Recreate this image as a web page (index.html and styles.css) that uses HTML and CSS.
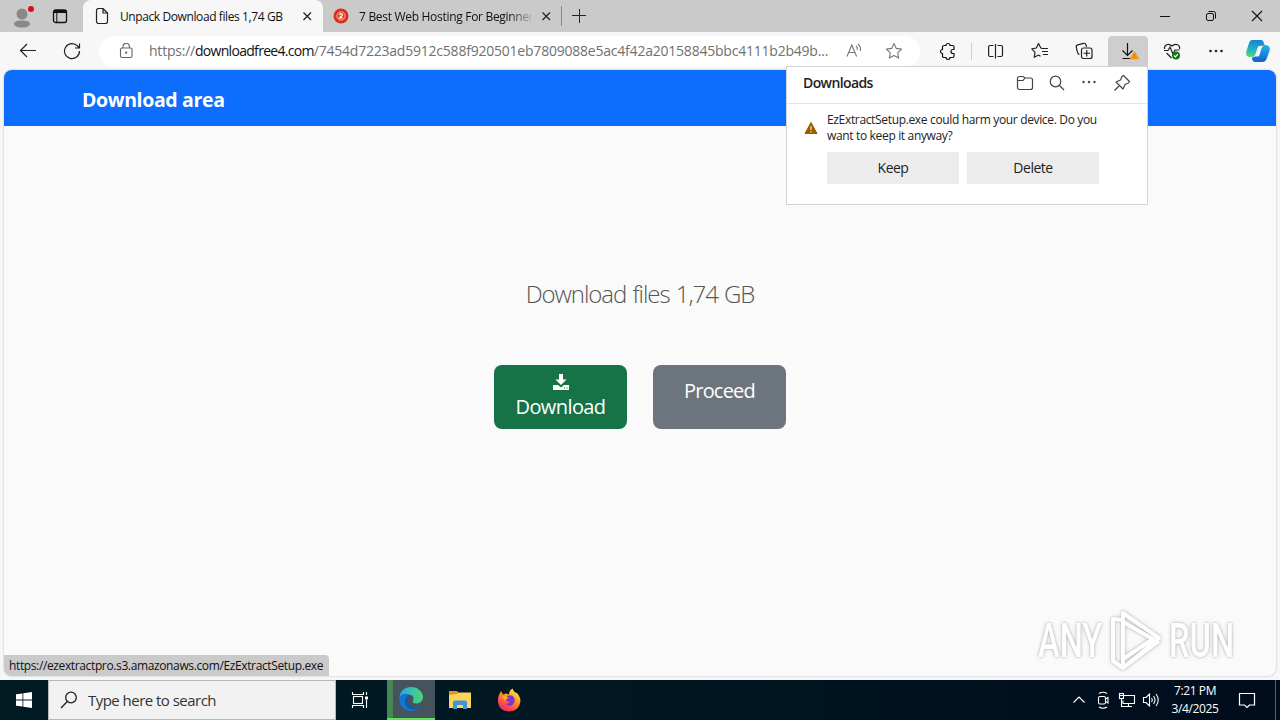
FILE: index.html
```html
<!DOCTYPE html>
<html lang="en">
<head>
    <meta charset="UTF-8">
    <meta name="viewport" content="width=device-width, initial-scale=1.0">
    <title>Unpack Download files 1,74 GB</title>
    <link rel="stylesheet" href="styles.css">
</head>
<body>
    <div class="tabstrip">
        <div class="profile">
            <svg width="24" height="24" viewBox="0 0 24 24"><circle cx="12" cy="9" r="5.500" fill="#8b8887"/><path d="M4 19.500c0-3.500 3.500-4 8-4s8 .5 8 4c-1.500 2.500-4.500 3-8 3s-6.500-.5-8-3z" fill="#8b8887"/><circle cx="21" cy="4" r="3" fill="#d80f16"/></svg>
        </div>
        <div class="tab-actions">
            <svg width="16" height="16" viewBox="0 0 16 16" fill="none" stroke="#111"><rect x="1.500" y="2" width="13" height="12.500" rx="2" stroke-width="1.300"/><path d="M2 3.500h12" stroke-width="3"/><path d="M4.800 4v10.500"/></svg>
        </div>
        <div class="tab active">
            <svg class="favicon" width="14" height="16" viewBox="0 0 14 16" fill="none" stroke="#222" stroke-width="1.200"><path d="M1.500 2.500a2 2 0 0 1 2-2H8l4.500 4.500v8.500a2 2 0 0 1-2 2h-7a2 2 0 0 1-2-2zM8 .5V5h4.500"/></svg>
            <span class="tab-title">Unpack Download files 1,74 GB</span>
            <svg class="close" width="10" height="10" viewBox="0 0 10 10" stroke="#222" stroke-width="1.300"><path d="M1.500 1.500l7.500 7.500M9 1.500L1.500 9"/></svg>
        </div>
        <div class="tab second">
            <svg class="favicon" width="16" height="16" viewBox="0 0 16 16"><circle cx="8" cy="8" r="7.500" fill="#d92e18"/><circle cx="8" cy="8" r="4.200" fill="#e0402a" stroke="#fff" stroke-width=".7" stroke-opacity=".8"/><path d="M6.300 6.800c.5-1.600 3.600-1.200 3 .5C8.700 8.500 7 8.800 6.400 9.800h3.300" fill="none" stroke="#fff" stroke-width="1.200"/></svg>
            <span class="tab-title fade">7 Best Web Hosting For Beginner</span>
            <svg class="close" width="10" height="10" viewBox="0 0 10 10" stroke="#222" stroke-width="1.200"><path d="M1.500 1.500l7.500 7.500M9 1.500L1.500 9"/></svg>
        </div>
        <div class="tab-divider"></div>
        <svg class="new-tab" width="14" height="14" viewBox="0 0 14 14" stroke="#222"><path d="M0 6.500h14M7.500 0v14"/></svg>
        <div class="window-buttons">
            <svg width="12" height="12" viewBox="0 0 12 12" stroke="#111"><path d="M1 6.500h10"/></svg>
            <svg width="12" height="12" viewBox="0 0 12 12" fill="none" stroke="#111"><rect x="1.500" y="3.500" width="7" height="7" rx="1.500"/><path d="M3.500 1.500h5a2 2 0 0 1 2 2v5"/></svg>
            <svg width="12" height="12" viewBox="0 0 12 12" stroke="#111" stroke-width="1.100"><path d="M1 1l10 10M11 1L1 11"/></svg>
        </div>
    </div>

    <div class="toolbar">
        <div class="nav-buttons">
            <svg width="18" height="16" viewBox="0 0 18 16" fill="none" stroke="#222" stroke-width="1.200"><path d="M17 7.500H1.500M8 1L1.500 7.500 8 14"/></svg>
            <svg width="18" height="18" viewBox="0 0 18 18" fill="none" stroke="#222" stroke-width="1.200"><path d="M16.500 9A7.500 7.500 0 1 1 14.500 4L16.500 6M16.500 1.500V6H12"/></svg>
        </div>
        <div class="address">
            <svg class="lock" width="14" height="16" viewBox="0 0 14 16" fill="none" stroke="#666" stroke-width="1.100"><rect x="1.500" y="5" width="11.500" height="9.500" rx="1.500"/><path d="M4 5V3.500a3.200 3.200 0 0 1 6.400 0V5"/><circle cx="7.200" cy="9.700" r=".6" fill="#666"/></svg>
            <span class="url">https://<b>downloadfree4.com</b>/7454d7223ad5912c588f920501eb7809088e5ac4f42a20158845bbc4111b2b49b...</span>
            <svg class="read" width="16" height="16" viewBox="0 0 16 16" fill="none" stroke="#777" stroke-width="1.100"><path d="M1 13.500L5.800 2 10.600 13.500M2.700 9.500h6.200M10 3q1.800 1.500 1.300 4M12 1q3.200 3 2.400 7"/></svg>
            <svg class="star" width="18" height="18" viewBox="0 0 18 18" fill="none" stroke="#777" stroke-width="1.100" stroke-linejoin="round"><path d="M9 1.500l2.300 4.900 5.300.7-3.900 3.700 1 5.300L9 13.500l-4.700 2.600 1-5.300L1.400 7.100l5.300-.7z"/></svg>
        </div>
        <div class="tools">
            <div class="tool ext"><svg width="16" height="18" viewBox="0 0 16 18" fill="none" stroke="#111" stroke-width="1.200"><path d="M6 3.500a2 2 0 0 1 4 0h2.500A1.500 1.500 0 0 1 14 5v2.500h-1a2 2 0 0 0 0 4h1V14a1.500 1.500 0 0 1-1.500 1.500H10a2 2 0 0 1-4 0H4A1.500 1.500 0 0 1 2.500 14v-2.500a2 2 0 0 1 0-4V5A1.500 1.500 0 0 1 4 3.500z"/></svg></div>
            <div class="tool-divider"></div>
            <div class="tool"><svg width="16" height="18" viewBox="0 0 16 18" fill="none" stroke="#222" stroke-width="1.200"><path d="M5.500 3.500H2A1.500 1.500 0 0 0 .6 5v8A1.500 1.500 0 0 0 2 14.500h3.500M7.500 2v14.500M9.500 3.500H13A1.500 1.500 0 0 1 14.500 5v8a1.500 1.500 0 0 1-1.500 1.500H9.500"/></svg></div>
            <div class="tool"><svg width="18" height="18" viewBox="0 0 18 18" fill="none" stroke="#222" stroke-width="1.200" stroke-linejoin="round"><path d="M11 6.300L9.800 6 7.500 1.500 5.300 6l-4.500.8L4 10.300l-.8 5L7.500 13l2 1.200M11 6.500h6M11 9.500h6M12 12.500h5"/></svg></div>
            <div class="tool"><svg width="18" height="18" viewBox="0 0 18 18" fill="none" stroke="#222" stroke-width="1.200"><path d="M4.500 12.500C2 12 3 10.500 2 8.500L1.300 5.200a2 2 0 0 1 1.400-2.400l6-1.500A2 2 0 0 1 11 2.800L11.500 5"/><rect x="6.500" y="6" width="10.500" height="10.500" rx="2"/><path d="M11.750 8v6.500M8.500 11.250H15"/></svg></div>
            <div class="tool pressed"><svg width="22" height="20" viewBox="0 0 22 20" fill="none" stroke="#111" stroke-width="1.200"><path d="M10.500 2v12.500M5.500 9.500l5 5 5-5M5.500 17.500h8"/><path d="M17.500 10.500L22 18h-9z" fill="#f7971d" stroke="#f7971d" stroke-width=".8" stroke-linejoin="round"/><path d="M17.400 13v2.300M17.400 16v1" stroke="#b56a08" stroke-width=".8"/></svg></div>
            <div class="tool"><svg width="18" height="18" viewBox="0 0 18 18" fill="none" stroke="#222" stroke-width="1.200"><path d="M1.500 7C.8 3 5.500.5 9 4c3.500-3.500 8.500-1 7.500 3M1 8.500h4l2-3.500 3 7 2-4h4.500M3.500 11l5 5"/><circle cx="13" cy="13.500" r="4" fill="#16751b" stroke="none"/><path d="M11.100 13.500l1.300 1.300 2.500-2.600" stroke="#fff"/></svg></div>
            <div class="tool"><svg width="16" height="4" viewBox="0 0 16 4" fill="#222"><circle cx="2.500" cy="2" r="1.300"/><circle cx="8" cy="2" r="1.300"/><circle cx="13.500" cy="2" r="1.300"/></svg></div>
            <svg class="copilot" width="26" height="24" viewBox="0 0 26 24">
                <defs>
                    <linearGradient id="cp1" x1="0" y1="0" x2="0" y2="1"><stop offset="0" stop-color="#1581d8"/><stop offset=".6" stop-color="#25b9be"/><stop offset="1" stop-color="#57da73"/></linearGradient>
                    <linearGradient id="cp2" x1="0" y1="0" x2="0" y2="1"><stop offset="0" stop-color="#23b4f0"/><stop offset="1" stop-color="#145fca"/></linearGradient>
                </defs>
                <path d="M7 1h9c2 0 2.500 1.500 3 3.500L20 7h-4l-5.500 9Q9.500 18 6.500 18H4Q0 17 1.500 12L4 4Q5 1 7 1z" fill="url(#cp1)"/>
                <path d="M16 6h5q5 1 3.500 6l-3 8q-1 3-4 3H10q-2.500 0-3.200-4L10 17z" fill="url(#cp2)"/>
                <path d="M14.500 7h4q-1.500.5-2.200 3l-1.800 6q-.5 1.500-2 1.500H8.500q1.500-.5 2-2.500l2-6q.5-2 2-2z" fill="#f7f7f7"/>
            </svg>
        </div>
    </div>

    <div class="page">
        <header class="navbar">Download area</header>
        <main>
            <h1>Download files 1,74 GB</h1>
            <div class="buttons">
                <a class="btn green">
                    <svg width="16" height="16" viewBox="0 0 16 16"><path d="M6 0h4v5.500h3.500L8 11 2.500 5.500H6zM0 11h5l3 2.500 3-2.500h5v5H0z" fill="#fff"/><path d="M11 14h1M13.500 14h1" stroke="#16794c"/></svg>
                    <span>Download</span>
                </a>
                <a class="btn gray"><span>Proceed</span></a>
            </div>
        </main>
        <div class="watermark">
            <span>ANY</span>
            <svg width="60" height="64" viewBox="0 0 60 64" fill="none" stroke="#fff" stroke-width="4" stroke-linejoin="round"><path d="M17 4L53 29 17 59V4zM16 11L7 10v42l10 7 36-27M17 13l30 17-30 20"/></svg>
            <span>RUN</span>
        </div>
        <div class="status">https://ezextractpro.s3.amazonaws.com/EzExtractSetup.exe</div>
    </div>

    <div class="downloads">
        <div class="downloads-head">
            <h2>Downloads</h2>
            <svg class="folder" width="18" height="16" viewBox="0 0 18 16" fill="none" stroke="#444" stroke-width="1.200"><path d="M1.500 3.500a2 2 0 0 1 2-2H7l2 1.500h5.500a2 2 0 0 1 2 2v7.500a2 2 0 0 1-2 2h-11a2 2 0 0 1-2-2zM2 5.500h5L9 3"/></svg>
            <svg width="16" height="16" viewBox="0 0 16 16" fill="none" stroke="#444" stroke-width="1.200"><circle cx="6.500" cy="6.500" r="5.300"/><path d="M10.500 10.500l4.500 4.500"/></svg>
            <svg width="16" height="16" viewBox="0 0 16 16" fill="#444"><circle cx="2.500" cy="7" r="1.200"/><circle cx="8" cy="7" r="1.200"/><circle cx="13.500" cy="7" r="1.200"/></svg>
            <svg width="18" height="18" viewBox="0 0 18 18" fill="none" stroke="#444" stroke-width="1.200" stroke-linejoin="round"><path d="M10.500 1.500l6 6-1 1.500-3.500 1.500-2 4.500-7-7 4.500-2L9 2.500zM6.500 11.500L1.500 16.500"/></svg>
        </div>
        <div class="downloads-item">
            <svg width="14" height="14" viewBox="0 0 14 14"><path d="M7 1.500L13 12.500H1z" fill="#9a5c00" stroke="#9a5c00" stroke-linejoin="round"/><path d="M7 5v4M7 10v1.500" stroke="#ffe0a0" stroke-width="1.200"/></svg>
            <div>
                <p><span class="line1">EzExtractSetup.exe could harm your device. Do you</span><br><span class="line2">want to keep it anyway?</span></p>
                <div class="choices">
                    <button>Keep</button>
                    <button>Delete</button>
                </div>
            </div>
        </div>
    </div>

    <div class="taskbar">
        <div class="start"><svg width="16" height="16" viewBox="0 0 16 16" fill="#fff"><path d="M0 2.300L6.500 1.400v6.200H0zM7.300 1.200L16 0v7.600H7.300zM0 8.400h6.500v6.200L0 13.700zM7.300 8.400H16V16l-8.700-1.200z"/></svg></div>
        <div class="search">
            <svg width="18" height="18" viewBox="0 0 18 18" fill="none" stroke="#222" stroke-width="1.300"><circle cx="11" cy="6.500" r="5.300"/><path d="M7.300 10.500L1 17"/></svg>
            <span>Type here to search</span>
        </div>
        <div class="task"><svg width="18" height="18" viewBox="0 0 18 18" fill="none" stroke="#fff" stroke-width="1.100"><rect x="2.500" y="5.500" width="9" height="7"/><path d="M1.500 1v2.500h11V1M1.500 17v-2.500h11V17M15.500 1v3M15.500 9v8"/><path d="M14 5.500h3v3h-3z" fill="#fff" stroke="none"/></svg></div>
        <div class="task edge"><svg width="24" height="24" viewBox="0 0 24 24">
            <defs><linearGradient id="eg" x1="0" x2="1"><stop offset="0" stop-color="#24a8e5"/><stop offset="1" stop-color="#4ad873"/></linearGradient></defs>
            <path d="M.5 10.500C1 4 6 0 12 0c7 0 12 5 12 10 0 4-3 6.500-7 6.500-3 0-4-1.500-3-3 2-3-1-6-4.500-6S2 9 .5 10.500z" fill="url(#eg)"/>
            <path d="M.3 11C2 7 7 6 10 7.500 7 9 6.500 12 7.500 15c1.500 4 6 6 10 5 2-.5 3-1.500 4-1C19.500 22 16 24 12 24 5 24-.5 18 .3 11z" fill="#1575cf"/>
            <path d="M10.500 9C8 11 7.500 14 9 17c2 3 7 4.500 12.500 2-3 4-8 4-11 3-5-2-6-9-3-11.500z" fill="#0f5bab"/>
        </svg></div>
        <div class="task explorer"><svg width="24" height="20" viewBox="0 0 24 20"><path d="M1 1h8l2 2h11v4H1z" fill="#e59a1c"/><path d="M1 5l8-1 2-1.500h12V18H1z" fill="#fbd35f"/><path d="M5 19v-6.500a2 2 0 0 1 2-2h10a2 2 0 0 1 2 2V19h-4v-4H9v4z" fill="#3f97cf"/></svg></div>
        <div class="task firefox"><svg width="24" height="24" viewBox="0 0 24 24">
            <defs><linearGradient id="fx" x1=".8" y1="0" x2=".2" y2="1"><stop offset="0" stop-color="#fff04b"/><stop offset=".4" stop-color="#ff9a1f"/><stop offset=".75" stop-color="#ff4648"/><stop offset="1" stop-color="#e52478"/></linearGradient></defs>
            <path d="M4 3l2 3.500L9 5.500l3 1q0-4 3.500-6Q16 3 19 5l.5-.5Q24 9 23.300 14 22 23 12 23.500 2 23 1 14 .500 8 4 3z" fill="url(#fx)"/>
            <path d="M10 8q5-2 7 1.500t-1 7q-4 3-8-1 4 1 4.500-2-3 .5-4.500-1.500L10 10z" fill="#7c35d5"/>
            <path d="M5 9q3-2 7 1-3 0-3 3-2-1-4-4z" fill="#ffad24"/>
        </svg></div>
        <div class="tray">
            <svg width="14" height="14" viewBox="0 0 14 14" fill="none" stroke="#fff" stroke-width="1.200"><path d="M1.500 9.500L7 4l5.500 5.500"/></svg>
            <svg class="camera" width="14" height="18" viewBox="0 0 14 18" fill="none" stroke="#fff" stroke-width="1.100"><rect x="2.500" y="5.500" width="7" height="7.500" rx="1.500"/><path d="M9.500 8L12 6.500v5.500L9.500 10.500M3 2.500q4-2.500 8 0M3 16q4 2.500 8 0"/></svg>
            <svg class="network" width="18" height="16" viewBox="0 0 18 16" fill="none" stroke="#fff" stroke-width="1.100"><path d="M6 3.500h10.500v8H5V8.500M10.500 11.500v3M7 14.500h7M3.500 6.500v8H7"/><rect x="1.500" y="1.500" width="4" height="5"/><path d="M2 3.500h3"/></svg>
            <svg class="volume" width="18" height="16" viewBox="0 0 18 16" fill="none" stroke="#fff" stroke-width="1.100"><path d="M1.500 5.500H4L7.500 2v12L4 10.500H1.500zM9.500 6q1.500 2 0 4M11.500 4q3 4 0 8M14 2q4.500 6 0 12"/></svg>
        </div>
        <div class="clock"><span class="time">7:21 PM</span><span class="date">3/4/2025</span></div>
        <div class="notify"><svg width="18" height="18" viewBox="0 0 18 18" fill="none" stroke="#fff" stroke-width="1.200"><path d="M1.500 2.500h15v11.500h-5L9 16.500 6.500 14h-5z"/></svg></div>
    </div>
</body>
</html>
```
FILE: styles.css
```css
* {
    box-sizing: border-box;
}

body {
    margin: 0;
    width: 1280px;
    height: 720px;
    overflow: hidden;
    position: relative;
    display: flex;
    flex-direction: column;
    background-color: #f7f7f7;
    font-family: "Open Sans", "Noto Sans", sans-serif;
    color: #111;
}

svg {
    display: block;
    flex: none;
}

span, h1, h2 {
    white-space: nowrap;
}

/* tabs */
.tabstrip {
    display: flex;
    align-items: center;
    height: 32px;
    background-color: #cacaca;
    flex: none;
}

.profile {
    width: 36px;
    padding: 0 0 0 10px;
    margin-top: 2px;
}

.tab-actions {
    width: 47px;
    padding-left: 16px;
}

.tab {
    display: flex;
    align-items: center;
    width: 240px;
    height: 32px;
    padding-left: 12px;
    font-size: 12px;
}

.tab.active {
    background-color: #f7f7f7;
    border-radius: 8px 8px 0 0;
}

.tab.second {
    width: 238px;
    padding-left: 10px;
}

.tab-title {
    width: 172px;
    margin-left: 11px;
    margin-right: 10px;
    letter-spacing: -0.4px;
}

.tab-title.fade {
    margin-left: 10px;
    letter-spacing: -0.3px;
    -webkit-mask-image: linear-gradient(to right, #000 150px, transparent 176px);
    mask-image: linear-gradient(to right, #000 150px, transparent 176px);
}

.tab-divider {
    width: 1px;
    height: 20px;
    background-color: #888;
}

.new-tab {
    margin-left: 10px;
}

.window-buttons {
    display: flex;
    gap: 34px;
    margin-left: auto;
    padding-right: 17px;
}

/* toolbar */
.toolbar {
    display: flex;
    align-items: center;
    height: 38px;
    flex: none;
}

.nav-buttons {
    display: flex;
    align-items: center;
    gap: 26px;
    width: 99px;
    padding-left: 19px;
}

.address {
    display: flex;
    align-items: center;
    width: 821px;
    height: 31px;
    padding-left: 20px;
    background-color: #fff;
    border-radius: 16px;
    color: #707070;
}

.url {
    width: 682px;
    margin-left: 16px;
    padding-bottom: 1px;
    font-size: 14px;
    letter-spacing: -0.22px;
}

.url b {
    font-weight: normal;
    letter-spacing: -0.7px;
    color: #111;
}

.read {
    margin-left: 15px;
}

.star {
    margin-left: 23px;
}

.tools {
    display: flex;
    align-items: center;
    margin-left: 8px;
}

.tool {
    display: flex;
    align-items: center;
    justify-content: center;
    width: 40px;
    height: 30px;
    margin-right: 4px;
}

.tool.ext {
    margin-right: 3px;
}

.tool-divider {
    width: 1px;
    height: 17px;
    margin-right: 4px;
    background-color: #cfcfcf;
}

.pressed {
    background-color: #cecece;
    border-radius: 4px 4px 0 0;
}

.copilot {
    margin-left: 5px;
}

/* page */
.page {
    position: relative;
    height: 606px;
    margin: 0 4px 4px;
    background-color: #fafafa;
    border-radius: 8px;
    box-shadow: 0 0 2px rgba(0, 0, 0, 0.3);
    overflow: hidden;
    flex: none;
}

.navbar {
    height: 56px;
    padding-left: 78px;
    background-color: #0d6efd;
    color: #fff;
    font-size: 19.5px;
    font-weight: 700;
    line-height: 60px;
    letter-spacing: -0.35px;
}

main {
    display: flex;
    flex-direction: column;
    align-items: center;
    padding-top: 150px;
}

h1 {
    margin: 0;
    height: 36px;
    line-height: 35px;
    font-size: 24px;
    font-weight: 300;
    letter-spacing: -1.05px;
    word-spacing: 1px;
    color: #555;
}

.buttons {
    display: flex;
    gap: 26px;
    margin-top: 53px;
}

.btn {
    display: flex;
    flex-direction: column;
    align-items: center;
    width: 133px;
    height: 64px;
    border-radius: 8px;
    color: #fff;
    font-size: 20px;
    line-height: 24px;
    letter-spacing: -0.6px;
}

.green {
    background-color: #157347;
    padding-top: 9px;
}

.green span {
    margin-top: 5px;
}

.gray {
    background-color: #6c757d;
    padding-top: 14px;
    letter-spacing: -0.8px;
}

.watermark {
    position: absolute;
    left: 1034px;
    top: 539px;
    display: flex;
    align-items: center;
    filter: drop-shadow(0 0 1px rgba(0, 0, 0, 0.3)) drop-shadow(0 0 2px rgba(0, 0, 0, 0.2));
    opacity: 0.75;
}

.watermark span {
    width: 64px;
    font-family: Roboto, sans-serif;
    font-size: 48px;
    font-weight: 500;
    line-height: 64px;
    color: #fff;
    transform: scaleX(0.68);
    transform-origin: left;
}

.watermark svg {
    margin: 0 3px 0 4px;
}

.status {
    position: absolute;
    left: 0;
    bottom: 0;
    width: 325px;
    height: 21px;
    padding-left: 5px;
    background-color: #cacaca;
    border-radius: 0 4px 0 0;
    font-size: 12px;
    line-height: 21px;
    letter-spacing: -0.37px;
    white-space: nowrap;
}

/* downloads flyout */
.downloads {
    position: absolute;
    left: 786px;
    top: 66px;
    width: 362px;
    height: 139px;
    background-color: #fff;
    border: 1px solid #d3d3d3;
    color: #222;
}

.downloads-head {
    display: flex;
    align-items: center;
    gap: 16px;
    height: 37px;
    padding: 0 16px 5px 16px;
    border-bottom: 1px solid #e5e5e5;
}

.folder {
    margin-right: -1px;
}

h2 {
    margin: 0 auto 0 0;
    font-size: 14px;
    font-weight: 600;
    letter-spacing: -0.6px;
}

.downloads-item {
    display: flex;
    padding: 8px 0 0 17px;
}

.downloads-item > svg {
    margin: 9px 9px 0 0;
}

.downloads-item p {
    margin: 0;
    font-size: 12px;
    line-height: 16px;
    letter-spacing: -0.34px;
}

.choices {
    display: flex;
    gap: 8px;
    margin-top: 8px;
}

.choices button {
    width: 132px;
    height: 32px;
    padding: 0 0 1px;
    border: none;
    background-color: #ececec;
    color: #222;
    font-family: inherit;
    font-size: 14px;
    letter-spacing: -0.5px;
}

/* taskbar */
.taskbar {
    display: flex;
    align-items: center;
    height: 40px;
    flex: none;
    background: linear-gradient(to right, #001a22, #001722 50%, #000c1c);
    color: #fff;
}

.start {
    width: 48px;
    padding-left: 16px;
}

.search {
    display: flex;
    align-items: center;
    width: 288px;
    height: 40px;
    padding-left: 11px;
    background-color: #f2f2f2;
    border: 1px solid #b8b8b8;
    color: #333;
    font-size: 15px;
}

.search span {
    margin-left: 10px;
    letter-spacing: -0.53px;
}

.task {
    display: flex;
    align-items: center;
    justify-content: center;
    width: 48px;
    height: 40px;
}

.edge {
    margin-left: 3px;
    background: linear-gradient(to right, #478653 6px, #45535d 6px);
    border-bottom: 2px solid #5be552;
}

.explorer, .firefox {
    width: 49px;
}

.tray {
    display: flex;
    align-items: center;
    margin-left: auto;
}

.camera {
    margin-left: 10px;
}

.network {
    margin-left: 8px;
}

.volume {
    margin-left: 6px;
}

.clock {
    display: flex;
    flex-direction: column;
    align-items: center;
    width: 66px;
    margin-left: 2px;
    font-size: 12px;
    line-height: 18px;
    letter-spacing: -0.4px;
}

.notify {
    width: 48px;
    height: 40px;
    margin-right: 4px;
    padding: 11px 0 0 10px;
    border-right: 1px solid #56616c;
}
```
